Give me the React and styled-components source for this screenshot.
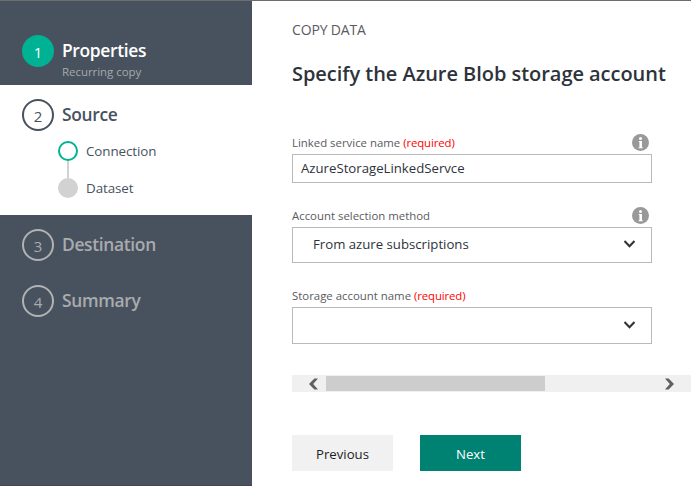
import React from 'react';
import styled, { createGlobalStyle } from 'styled-components';

const GlobalStyle = createGlobalStyle`
  * { box-sizing: border-box; }
  body {
    margin: 0;
    background: #fff;
    font-family: "Open Sans", "Noto Sans", sans-serif;
    overflow: hidden;
  }
`;

const Page = styled.div`
  display: flex;
  width: 691px;
  height: 486px;
  border-top: 1px solid #6d6d6d;
`;

const Sidebar = styled.nav`
  width: 252px;
  background: #48525e;
  border-bottom: 1px solid #414852;
`;

const themes = {
  done: { title: '#ffffff', digit: '#ffffff', ring: '#00b294', fill: '#00b294', bg: 'transparent' },
  active: { title: '#48525e', digit: '#48525e', ring: '#48525e', fill: '#ffffff', bg: '#ffffff' },
  pending: { title: '#a9abae', digit: '#a9abae', ring: '#b0b2b4', fill: 'transparent', bg: 'transparent' },
};

const StepSection = styled.section`
  height: ${(p) => p.$height}px;
  padding: ${(p) => p.$top}px 0 0 22px;
  background: ${(p) => themes[p.$state].bg};
`;

const StepHead = styled.div`
  display: flex;
  gap: 8px;
  height: 32px;
`;

const StepNumber = styled.span`
  display: flex;
  align-items: center;
  justify-content: center;
  width: 32px;
  height: 32px;
  padding-top: 1px;
  border: 2px solid ${(p) => themes[p.$state].ring};
  border-radius: 50%;
  background: ${(p) => themes[p.$state].fill};
  color: ${(p) => themes[p.$state].digit};
  font-size: 15px;
  font-weight: 400;
  line-height: 24px;
`;

const StepTitle = styled.div`
  margin-top: 3px;
  color: ${(p) => themes[p.$state].title};
  font-size: 17.4px;
  font-weight: 600;
  line-height: 24px;
  letter-spacing: -0.33px;
`;

const StepNote = styled.div`
  margin-top: 2px;
  color: #a5a8ac;
  font-size: 11.5px;
  line-height: 16px;
  letter-spacing: -0.05px;
`;

const SubSteps = styled.ol`
  display: flex;
  flex-direction: column;
  margin: 10px 0 0 36px;
  padding: 0;
  list-style: none;
`;

const SubStep = styled.li`
  display: flex;
  gap: 8px;
  height: 20px;
  color: #48525e;
  font-size: 13.4px;
  line-height: 21px;
  letter-spacing: -0.08px;
`;

const Dot = styled.span`
  width: 20px;
  height: 20px;
  border-radius: 50%;
  border: 2px solid ${(p) => (p.$current ? '#00b294' : '#d2d2d2')};
  background: ${(p) => (p.$current ? '#fff' : '#d2d2d2')};
`;

const Connector = styled.li`
  width: 2px;
  height: 17px;
  margin-left: 9px;
  background: #d2d2d2;
`;

const Main = styled.main`
  flex: 1;
  padding: 19px 0 0 40px;
`;

const Kicker = styled.div`
  color: #5a5a5f;
  font-size: 14px;
  line-height: 20px;
  letter-spacing: -0.15px;
`;

const Heading = styled.h1`
  margin: 20px 0 0;
  color: #2e333b;
  font-size: 20px;
  font-weight: 600;
  line-height: 28px;
  letter-spacing: -0.04px;
  white-space: nowrap;
`;

const Form = styled.form`
  display: flex;
  flex-direction: column;
  gap: 24px;
  width: 360px;
  margin-top: 46px;
`;

const LabelRow = styled.div`
  display: flex;
  justify-content: space-between;
  height: 20px;
  padding-right: 3px;
`;

const Label = styled.label`
  color: #5a5a5f;
  font-size: 11.4px;
  line-height: 17px;
`;

const Required = styled.span`
  color: #f00;
  letter-spacing: -0.12px;
`;

const Control = styled.div`
  display: flex;
  align-items: center;
  justify-content: space-between;
  height: ${(p) => p.$height}px;
  padding: 0 16px ${(p) => (p.$select ? 2 : 1)}px ${(p) => (p.$select ? 20 : 8)}px;
  border: 1px solid #bababa;
  color: #2e333b;
  font-size: 13.2px;
  line-height: 20px;
`;

const ScrollBar = styled.div`
  display: flex;
  align-items: center;
  width: 399px;
  height: 17px;
  margin-top: 31px;
  padding: 0 16px;
  background: #f0f0f0;
`;

const Thumb = styled.div`
  width: 219px;
  height: 15px;
  margin: 0 120px 0 8px;
  background: #cdcdcd;
`;

const Actions = styled.div`
  display: flex;
  gap: 27px;
  margin-top: 43px;
`;

const Button = styled.button`
  width: 101px;
  height: 36px;
  padding: 2px 0 0;
  border: 0;
  background: ${(p) => (p.$primary ? '#008272' : '#f1f1f1')};
  color: ${(p) => (p.$primary ? '#fff' : '#1e1e1e')};
  font: 400 13.2px "Open Sans", "Noto Sans", sans-serif;
`;

const InfoIcon = () => (
  <svg width="17" height="17" viewBox="0 0 17 17">
    <circle cx="8.5" cy="8.5" r="8.5" fill="#999" />
    <circle cx="8.5" cy="4.4" r="1.5" fill="#fff" />
    <path d="M6.8 7H10v6.2h.7v1H6.6v-1h.8V8h-.6z" fill="#fff" />
  </svg>
);

const ChevronDown = () => (
  <svg width="11" height="8" viewBox="0 0 11 8">
    <path d="M0.5 1L5.5 6.2L10.5 1" fill="none" stroke="#333" strokeWidth="2.1" />
  </svg>
);

const ScrollArrow = ({ right }) => (
  <svg width="10" height="12" viewBox="0 0 10 12">
    <path d={right ? 'M0 .5h3.6L9 6l-5.4 5.5H0L4.8 6z' : 'M10 .5H6.4L1 6l5.4 5.5H10L5.2 6z'} fill="#606060" />
  </svg>
);

const Step = ({ n, title, note, state, height, top, children }) => (
  <StepSection $state={state} $height={height} $top={top}>
    <StepHead>
      <StepNumber $state={state}>{n}</StepNumber>
      <div>
        <StepTitle $state={state}>{title}</StepTitle>
        {note && <StepNote>{note}</StepNote>}
      </div>
    </StepHead>
    {children}
  </StepSection>
);

const Field = ({ label, required, info, select, value, height }) => (
  <div>
    <LabelRow>
      <Label>
        {label} {required && <Required>(required)</Required>}
      </Label>
      {info && <InfoIcon />}
    </LabelRow>
    <Control $height={height} $select={select}>
      <span>{value}</span>
      {select && <ChevronDown />}
    </Control>
  </div>
);

export default function App() {
  return (
    <>
      <GlobalStyle />
      <Page>
        <Sidebar>
          <Step n="1" title="Properties" note="Recurring copy" state="done" height={84} top={34} />
          <Step n="2" title="Source" state="active" height={130} top={14}>
            <SubSteps>
              <SubStep><Dot $current />Connection</SubStep>
              <Connector />
              <SubStep><Dot />Dataset</SubStep>
            </SubSteps>
          </Step>
          <Step n="3" title="Destination" state="pending" height={56} top={14} />
          <Step n="4" title="Summary" state="pending" height={56} top={14} />
        </Sidebar>
        <Main>
          <Kicker>COPY DATA</Kicker>
          <Heading>Specify the Azure Blob storage account</Heading>
          <Form>
            <Field label="Linked service name" required info value="AzureStorageLinkedServce" height={29} />
            <Field label="Account selection method" info select value="From azure subscriptions" height={36} />
            <Field label="Storage account name" required select value="" height={37} />
          </Form>
          <ScrollBar>
            <ScrollArrow />
            <Thumb />
            <ScrollArrow right />
          </ScrollBar>
          <Actions>
            <Button type="button">Previous</Button>
            <Button type="button" $primary>Next</Button>
          </Actions>
        </Main>
      </Page>
    </>
  );
}
